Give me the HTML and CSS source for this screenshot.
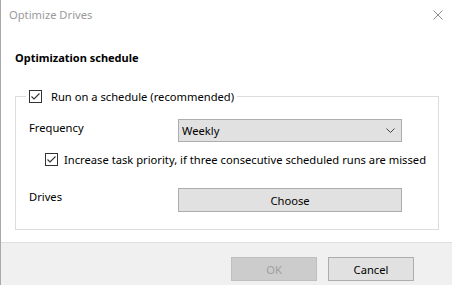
FILE: index.html
```html
<!DOCTYPE html>
<html lang="en">
<head>
  <meta charset="UTF-8" />
  <title>Optimize Drives</title>
  <link rel="stylesheet" href="styles.css">
</head>
<body>
  <div class="window">
    <!-- Title bar -->
    <div class="titlebar">
      <span class="title">Optimize Drives</span>
      <span class="close">
        <svg width="10" height="10" viewBox="0 0 10 10"><path d="M0.5 0.5 L9.5 9.5 M9.5 0.5 L0.5 9.5" stroke="#8a8a8a" stroke-width="1" fill="none"/></svg>
      </span>
    </div>

    <div class="content">
      <div class="heading">Optimization schedule</div>

      <fieldset class="group">
        <legend class="group-legend">
          <span class="check">
            <svg width="13" height="13" viewBox="0 0 13 13"><rect x="0.5" y="0.5" width="12" height="12" fill="#fff" stroke="#333"/><path d="M2.5 6.5 L5 9 L10.5 3.5" stroke="#333" stroke-width="1.1" fill="none"/></svg>
          </span>
          <span>Run on a schedule (recommended)</span>
        </legend>

        <div class="row row-freq">
          <span class="label">Frequency</span>
          <div class="combo">
            <span>Weekly</span>
            <svg width="9" height="5" viewBox="0 0 9 5"><path d="M0.5 0.5 L4.5 4.5 L8.5 0.5" stroke="#444" stroke-width="1" fill="none"/></svg>
          </div>
        </div>

        <div class="row-check">
          <span class="check">
            <svg width="13" height="13" viewBox="0 0 13 13"><rect x="0.5" y="0.5" width="12" height="12" fill="#fff" stroke="#333"/><path d="M2.5 6.5 L5 9 L10.5 3.5" stroke="#333" stroke-width="1.1" fill="none"/></svg>
          </span>
          <span>Increase task priority, if three consecutive scheduled runs are missed</span>
        </div>

        <div class="row row-drives">
          <span class="label">Drives</span>
          <div class="button wide">Choose</div>
        </div>
      </fieldset>
    </div>

    <!-- Footer buttons -->
    <div class="footer">
      <div class="button disabled">OK</div>
      <div class="button">Cancel</div>
    </div>
  </div>
</body>
</html>
```

FILE: styles.css
```css
html, body {
  margin: 0;
  padding: 0;
  background: #fff;
}

.window {
  width: 452px;
  height: 285px;
  box-sizing: border-box;
  border-left: 1px solid #a9a9a9;
  display: flex;
  flex-direction: column;
  font-family: "Noto Sans", "Open Sans", sans-serif;
  font-size: 11.2px;
  color: #000;
  white-space: nowrap;
}

.titlebar {
  height: 29px;
  display: flex;
  align-items: center;
  justify-content: space-between;
  padding: 0 9px 0 8px;
}

.title {
  color: #9a9a9a;
}

.close {
  display: flex;
}

.content {
  flex: 1;
  padding: 0 13px 0 14px;
}

.heading {
  font-weight: bold;
  font-size: 11px;
  line-height: 16px;
  margin-top: 21px;
}

.group {
  width: 424px;
  box-sizing: border-box;
  margin: 22px 0 0 0;
  padding: 0 36px 0 13px;
  border: 1px solid #dcdcdc;
  min-inline-size: 0;
}

.group-legend {
  display: flex;
  align-items: center;
  gap: 9px;
  padding: 0 3px;
  margin-left: -3px;
  line-height: 17px;
}

.check {
  display: flex;
}

.row {
  display: grid;
  grid-template-columns: 149px 224px;
  align-items: start;
}

.row .label {
  padding-top: 1px;
}

.row-freq {
  margin-top: 14px;
}

.combo {
  height: 23px;
  box-sizing: border-box;
  background: #e1e1e1;
  border: 1px solid #adadad;
  display: flex;
  align-items: center;
  justify-content: space-between;
  padding: 0 6px 0 3px;
}

.row-check {
  display: flex;
  align-items: center;
  gap: 6px;
  margin: 11px 0 0 16px;
  line-height: 13px;
}

.row-drives {
  margin: 22px 0 17px;
}

.button {
  height: 24px;
  box-sizing: border-box;
  background: #e1e1e1;
  border: 1px solid #adadad;
  display: flex;
  align-items: center;
  justify-content: center;
  width: 86px;
}

.button.wide {
  width: 224px;
}

.button.disabled {
  background: #cccccc;
  border-color: #bfbfbf;
  color: #a0a0a0;
}

.footer {
  height: 43px;
  box-sizing: border-box;
  background: #f0f0f0;
  border-top: 1px solid #dfdfdf;
  display: flex;
  justify-content: flex-end;
  gap: 11px;
  padding: 14px 38px 0 0;
}
```
